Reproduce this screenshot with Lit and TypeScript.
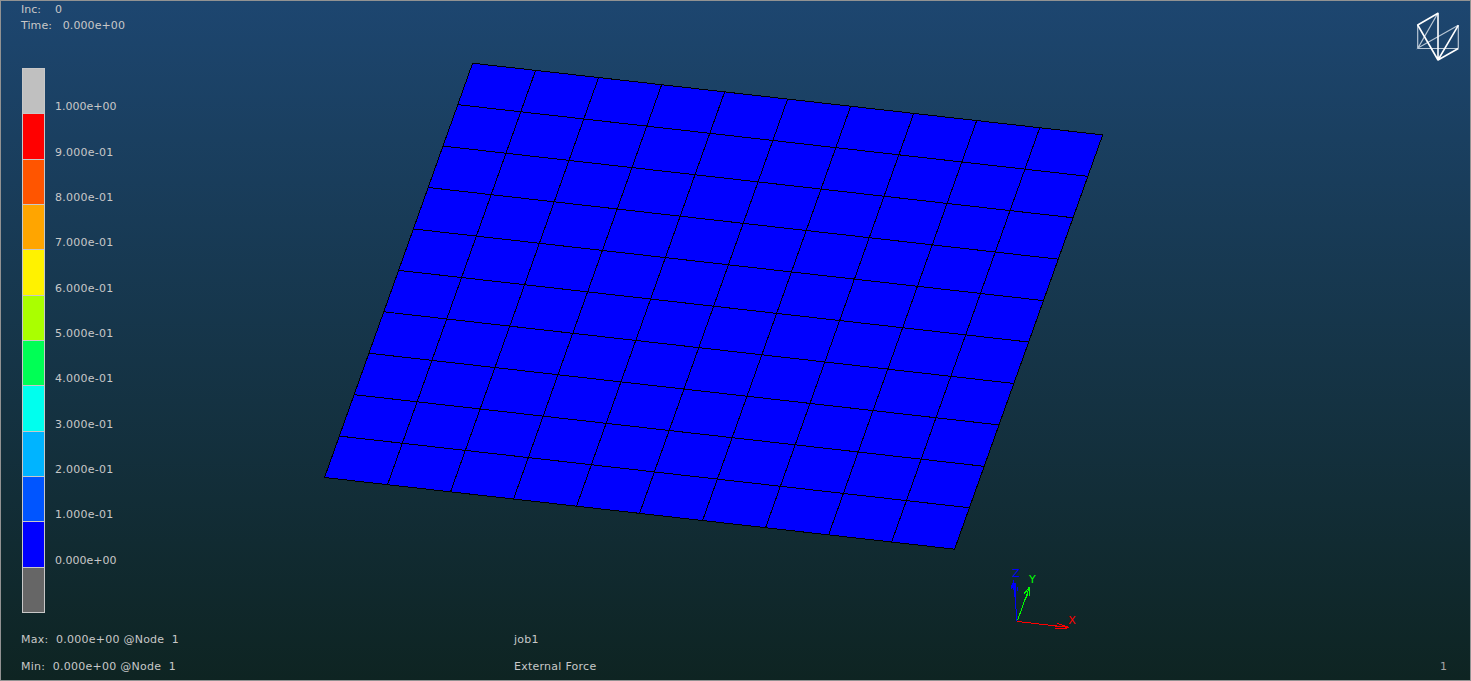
import { LitElement, html, css, svg } from "lit";
import { customElement } from "lit/decorators.js";
import { classMap } from "lit/directives/class-map.js";

type Point = [number, number];

const BANDS = ["#c0c0c0", "#ff0000", "#ff5500", "#ffa500", "#fff200", "#aaff00", "#00ff55", "#00ffee", "#00b4ff", "#0055ff", "#0000ff", "#666666"];
const LEVELS = ["1.000e+00", "9.000e-01", "8.000e-01", "7.000e-01", "6.000e-01", "5.000e-01", "4.000e-01", "3.000e-01", "2.000e-01", "1.000e-01", "0.000e+00"];

// Projected corners of the plate: top-left, top-right, bottom-right, bottom-left.
const CORNERS: Point[] = [[472.6, 63.2], [1102.7, 134.9], [954.6, 549.2], [324.5, 477.5]];
const DIVISIONS = 10;

const mix = (a: Point, b: Point, t: number): Point => [a[0] + (b[0] - a[0]) * t, a[1] + (b[1] - a[1]) * t];
const segment = (a: Point, b: Point) => `M${a[0]} ${a[1]}L${b[0]} ${b[1]}`;

@customElement("contour-legend")
export class ContourLegend extends LitElement {
  static styles = css`
    :host { display: flex; height: 545px; }
    .bar { box-sizing: border-box; width: 23px; height: 545px; border: 1px solid #c8c8c8; border-bottom: 0; display: flex; flex-direction: column; }
    .band { box-sizing: border-box; border-bottom: 1px solid #c8c8c8; }
    .levels { margin-left: 10px; padding-top: 32.4px; }
    .level { height: 45.333px; line-height: 14px; }
    .fraction { letter-spacing: 0.25px; }
  `;
  render() {
    return html`
      <div class="bar">
        ${BANDS.map((color, i) => {
          const height = Math.round(((i + 1) * 544) / 12) - Math.round((i * 544) / 12);
          return html`<div class="band" style="height:${height}px;background:${color}"></div>`;
        })}
      </div>
      <div class="levels">${LEVELS.map((t) => html`<div class=${classMap({ level: true, fraction: t.includes("-") })}>${t}</div>`)}</div>
    `;
  }
}

@customElement("model-view")
export class ModelView extends LitElement {
  static styles = css`
    :host { display: block; }
    svg { display: block; }
    .crisp { shape-rendering: crispEdges; fill: none; }
    .crisp.plate { fill: #0000ff; stroke: none; }
    .mesh { stroke: #000; }
    .x { stroke: #f00; }
    .y { stroke: #0f0; }
    .z { stroke: #00f; }
    .label { font: 11px "DejaVu Sans", sans-serif; }
    .bright { stroke: #fff; stroke-width: 1.6; fill: none; stroke-linejoin: round; }
    .soft { stroke: #b9c7d5; stroke-width: 1.2; fill: none; }
  `;
  render() {
    const [tl, tr, br, bl] = CORNERS;
    const lines: string[] = [];
    for (let i = 0; i <= DIVISIONS; i++) {
      const t = i / DIVISIONS;
      lines.push(segment(mix(tl, tr, t), mix(bl, br, t)));
      lines.push(segment(mix(tl, bl, t), mix(tr, br, t)));
    }
    return html`<svg width="1471" height="681" viewBox="0 0 1471 681">
      <polygon class="crisp plate" points=${CORNERS.map((p) => p.join(",")).join(" ")}></polygon>
      ${lines.map((d) => svg`<path class="crisp mesh" d=${d}></path>`)}
      <path class="crisp z" d="M1016.5 621V609M1015.5 609V590M1014.5 597V583M1013.5 590V580M1012.5 588V583M1011.5 589V585M1015.5 590V583M1017.5 591V587"></path>
      <path class="crisp y" d="M1017.5 620.5L1029.5 587M1029.5 587L1023.5 594.5M1029.5 587V596M1028.5 589L1026.5 598"></path>
      <path class="crisp x" d="M1017.5 621.5L1069.5 627.5M1069.5 627.5L1057.5 623.5M1055 628.5H1067M1055 626.5H1067"></path>
      <text class="label" x="1012.3" y="577" fill="#00f">Z</text>
      <text class="label" x="1029" y="583" fill="#0f0">Y</text>
      <text class="label" x="1068.2" y="624" fill="#f00">X</text>
      <path class="soft" d="M1438 13L1418 48L1458.3 25.3M1418 48.5H1458M1417.7 25V48"></path>
      <path class="soft" d="M1458.3 25V48.5"></path>
      <path class="bright" d="M1438 60L1417.7 25L1438 13.3V60L1458.3 25.3M1438 60L1458.3 48.5"></path>
    </svg>`;
  }
}

@customElement("app-root")
export class AppRoot extends LitElement {
  static styles = css`
    :host {
      display: block; box-sizing: border-box; position: relative; width: 1471px; height: 681px; overflow: hidden;
      background: linear-gradient(#1d4670, #0e2422);
      color: #c8c8c8; font: 11px/16px "DejaVu Sans", sans-serif;
    }
    .canvas { position: absolute; inset: 0; }
    .frame { position: absolute; inset: 0; border: 1px solid #929292; }
    .overlay { position: relative; display: flex; flex-direction: column; padding: 2px 0 0 22px; }
    .status { height: 66px; margin-left: -1px; }
    .line { white-space: pre; }
    .inc { word-spacing: 3.5px; }
    .time { word-spacing: 1.8px; letter-spacing: 0.08px; }
    .footer { display: grid; grid-template-columns: 493px 926px 1fr; row-gap: 11px; padding-top: 19px; margin-left: -1px; letter-spacing: 0.25px; }
    .page { color: #a6a6a6; }
  `;
  render() {
    return html`
      <model-view class="canvas"></model-view>
      <div class="overlay">
        <div class="status"><div class="line inc">${"Inc:  0"}</div><div class="line time">${"Time:  0.000e+00"}</div></div>
        <contour-legend></contour-legend>
        <div class="footer">
          <span class="line">${"Max:  0.000e+00 @Node  1"}</span><span>job1</span><span></span>
          <span class="line">${"Min:  0.000e+00 @Node  1"}</span><span>External Force</span><span class="page">1</span>
        </div>
      </div>
      <div class="frame"></div>
    `;
  }
}
